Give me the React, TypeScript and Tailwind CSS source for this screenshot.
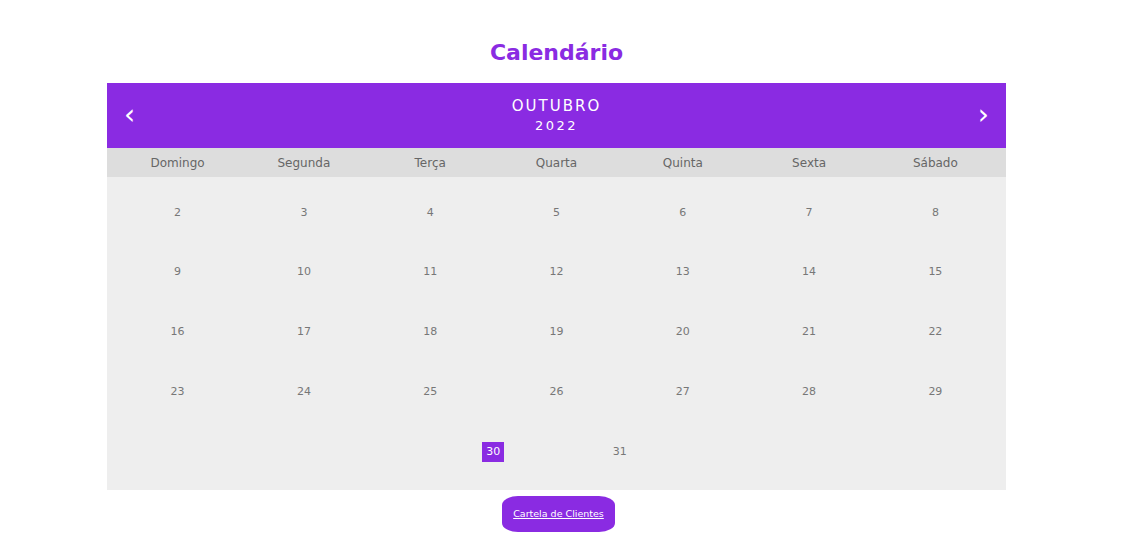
export default function App() {
  const weekDays = ["Domingo", "Segunda", "Terça", "Quarta", "Quinta", "Sexta", "Sábado"];
  const days = Array.from({ length: 30 }, (_, i) => i + 2);

  return (
    <div className="min-h-[553px] w-[1113px] bg-white font-['DejaVu_Sans',Verdana,sans-serif]">
      <h1 className="pt-[40px] text-center text-[22px] font-bold leading-[26px] text-[#8a2be2]">
        Calendário
      </h1>

      <div className="mx-auto mt-[17px] w-[899px]">
        <div className="flex h-[65px] items-center justify-between bg-[#8a2be2] px-[17px] text-white">
          <span className="pb-[2px] text-[28px] leading-none">‹</span>
          <div className="flex flex-col items-center">
            <span className="text-[15px] leading-[19px] tracking-[2px]">OUTUBRO</span>
            <span className="text-[13px] leading-[19px] tracking-[2.5px]">2022</span>
          </div>
          <span className="pb-[2px] text-[28px] leading-none">›</span>
        </div>

        <ul className="flex h-[29px] items-center justify-center bg-[#ddd]">
          {weekDays.map((d) => (
            <li key={d} className="w-[126.3px] text-center text-[12px] text-[#666]">
              {d}
            </li>
          ))}
        </ul>

        <ul className="flex flex-wrap justify-center bg-[#eee] pb-[8px] pt-[6px]">
          {days.map((n) => (
            <li
              key={n}
              className="flex h-[59.8px] w-[126.3px] items-center justify-center text-[11px] text-[#777]"
            >
              {n === 30 ? (
                <span className="bg-[#8a2be2] px-[4px] py-[2px] text-white">{n}</span>
              ) : (
                n
              )}
            </li>
          ))}
        </ul>
      </div>

      <div className="mt-[6px] flex justify-center pl-[4px]">
        <a
          href="#"
          className="flex h-[36px] w-[113px] items-center justify-center rounded-[16px/9px] bg-[#8a2be2] text-[9.5px] text-white underline"
        >
          Cartela de Clientes
        </a>
      </div>
    </div>
  );
}
